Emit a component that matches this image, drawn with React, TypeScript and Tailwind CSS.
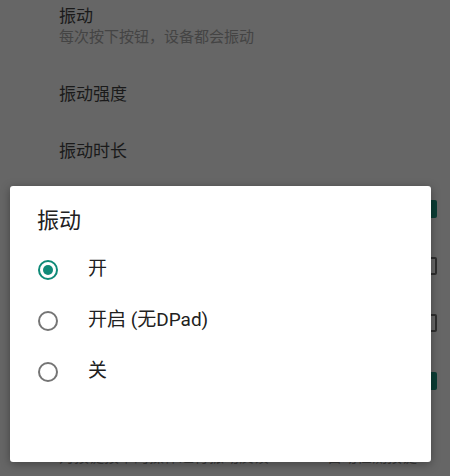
import React from "react";

const font = { fontFamily: '"Roboto", "Noto Sans CJK SC", sans-serif' };

function BgCheck({ checked }: { checked: boolean }) {
  return checked ? (
    <div className="w-[18px] h-[18px] rounded-[2px] bg-[#0b3d35]" />
  ) : (
    <div className="w-[18px] h-[18px] rounded-[2px] border-2 border-[#2e2e2e]" />
  );
}

function Radio({ checked }: { checked: boolean }) {
  return checked ? (
    <div className="w-[20px] h-[20px] rounded-full border-2 border-[#0f8a78] flex items-center justify-center">
      <div className="w-[10px] h-[10px] rounded-full bg-[#0f8a78]" />
    </div>
  ) : (
    <div className="w-[20px] h-[20px] rounded-full border-2 border-[#757575]" />
  );
}

export default function App() {
  const options = [
    { label: "开", checked: true },
    { label: "开启 (无DPad)", checked: false },
    { label: "关", checked: false },
  ];

  return (
    <div className="relative w-[450px] h-[476px] bg-[#666666] overflow-hidden" style={font}>
      {/* settings list behind the dialog */}
      <div className="flex flex-col pl-[59px] pr-[13px]">
        <div className="pt-[6px] h-[66px]">
          <div className="text-[17px] leading-[21px] text-[#1a1a1a]">振动</div>
          <div className="text-[15px] leading-[20px] text-[#444444]">每次按下按钮，设备都会振动</div>
        </div>
        <div className="h-[58px] flex items-center text-[17px] text-[#1a1a1a]">振动强度</div>
        <div className="h-[56px] flex items-center text-[17px] text-[#1a1a1a]">振动时长</div>
        <div className="h-[57px] flex items-center justify-end"><BgCheck checked /></div>
        <div className="h-[57px] flex items-center justify-end"><BgCheck checked={false} /></div>
        <div className="h-[58px] flex items-center justify-end"><BgCheck checked={false} /></div>
        <div className="h-[58px] flex items-center justify-end"><BgCheck checked /></div>
        <div className="h-[60px] flex items-end justify-between pb-[2px] text-[15px] text-[#3a3a3a]">
          <span>对按键按下的操作进行振动反馈</span>
          <span className="pr-[20px]">自动检测按键</span>
        </div>
      </div>

      {/* dialog */}
      <div className="absolute left-[10px] top-[186px] w-[421px] h-[276px] bg-white rounded-[3px] shadow-[0_2px_10px_rgba(0,0,0,0.35)]">
        <div className="pl-[27px] pt-[21px] text-[22px] leading-[28px] text-[#212121]">振动</div>
        <div className="flex flex-col mt-[9px]">
          {options.map((o) => (
            <div key={o.label} className="h-[51px] flex items-center pl-[28px]">
              <Radio checked={o.checked} />
              <span className="ml-[30px] text-[19px] text-[#212121]">{o.label}</span>
            </div>
          ))}
        </div>
      </div>
    </div>
  );
}
